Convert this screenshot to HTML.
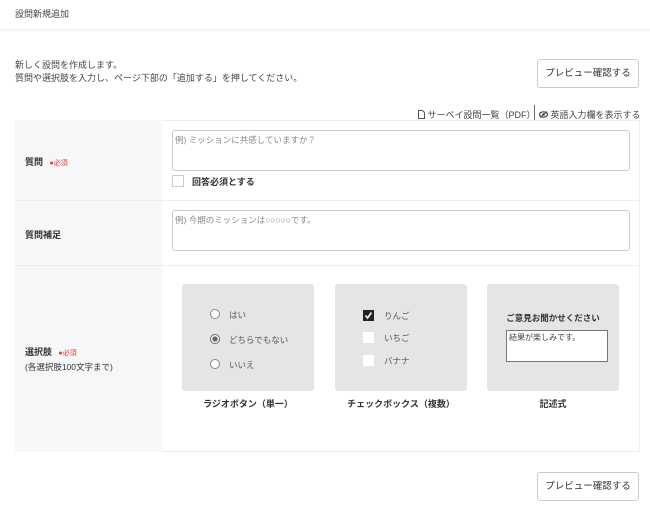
<!DOCTYPE html>
<html><head><meta charset="utf-8"><style>
*{box-sizing:border-box;margin:0;padding:0}
body{width:650px;height:512px;background:#fff;font-family:"Liberation Sans","Noto Sans CJK JP",sans-serif;color:#333;font-size:9px;position:relative;overflow:hidden}
.a{position:absolute}
.btn{position:absolute;left:537px;width:102px;height:29px;border:1px solid #ccc;border-radius:3px;background:#fff;font-size:9.5px;text-align:center;line-height:27px;color:#333}
.ta{position:absolute;left:172px;width:458px;height:41px;border:1px solid #ccc;border-radius:3px;padding:3px 2px;color:#888;font-size:8.5px}
.card{position:absolute;top:284px;width:132px;height:107px;background:#e5e5e5;border-radius:3px}
.cap{position:absolute;top:397px;width:132px;text-align:center;font-weight:bold;font-size:9px}
.rad{position:absolute;width:10px;height:10px;border:1px solid #888;border-radius:50%;background:#fff}
.cb{position:absolute;width:11px;height:11px;background:#fff}
.lab{position:absolute;font-size:8.5px;color:#555}
</style></head><body>
<div class="a" style="left:15px;top:7px;font-size:9px;color:#444">設問新規追加</div>
<div class="a" style="left:0;top:29px;width:650px;height:2px;background:#f4f5f7"></div>
<div class="a" style="left:15px;top:59px;line-height:13px;color:#444">新しく設問を作成します。<br>質問や選択肢を入力し、ページ下部の「追加する」を押してください。</div>
<div class="btn" style="top:59px">プレビュー確認する</div>
<div class="a" style="left:418px;top:108px;color:#444;font-size:9px">
<svg width="7" height="9" style="vertical-align:-1px"><path d="M.5.5h4l2 2v6h-6z" fill="none" stroke="#555"/></svg> サーベイ設問一覧（PDF）</div>
<div class="a" style="left:534px;top:105px;width:1px;height:16px;background:#666"></div>
<div class="a" style="left:539px;top:108px;color:#444;font-size:9px">
<svg width="9" height="7" style="vertical-align:0"><ellipse cx="4.5" cy="3.5" rx="4" ry="2.7" fill="none" stroke="#444" stroke-width="1.2"/><circle cx="4.5" cy="3.5" r="1.3" fill="#444"/><path d="M1 6.5L8 .5" stroke="#444"/></svg> 英語入力欄を表示する</div>
<div class="a" style="left:15px;top:120px;width:625px;height:332px;border:1px solid #eee"></div>
<div class="a" style="left:15px;top:120px;width:147px;height:332px;background:#f6f7f9"></div>
<div class="a" style="left:15px;top:200px;width:625px;height:1px;background:#eee"></div>
<div class="a" style="left:15px;top:265px;width:625px;height:1px;background:#eee"></div>
<div class="a" style="left:25px;top:155px;font-weight:bold;font-size:9px">質問 <span style="color:#e33;font-weight:normal;font-size:7px;margin-left:4px">●必須</span></div>
<div class="ta" style="top:130px">例) ミッションに共感していますか？</div>
<div class="a" style="left:172px;top:175px;width:12px;height:12px;border:1px solid #ccc"></div>
<div class="a" style="left:192px;top:175px;font-weight:bold;font-size:9px">回答必須とする</div>
<div class="a" style="left:25px;top:228px;font-weight:bold;font-size:9px">質問補足</div>
<div class="ta" style="top:210px">例) 今期のミッションは○○○○○です。</div>
<div class="a" style="left:25px;top:345px;font-weight:bold;font-size:9px">選択肢 <span style="color:#e33;font-weight:normal;font-size:7px;margin-left:4px">●必須</span></div>
<div class="a" style="left:25px;top:361px;font-size:8.5px">(各選択肢100文字まで)</div>
<div class="card" style="left:182px"></div>
<div class="rad" style="left:210px;top:309px"></div><div class="lab" style="left:229px;top:309px">はい</div>
<div class="rad" style="left:210px;top:334px;border-color:#666;background:radial-gradient(#666 45%,#fff 50%)"></div><div class="lab" style="left:229px;top:334px">どちらでもない</div>
<div class="rad" style="left:210px;top:359px"></div><div class="lab" style="left:229px;top:359px">いいえ</div>
<div class="cap" style="left:182px">ラジオボタン（単一）</div>
<div class="card" style="left:335px"></div>
<div class="cb" style="left:363px;top:310px;background:#222"><svg width="11" height="11"><path d="M2.5 5.5l2 2.5 4-5.5" fill="none" stroke="#fff" stroke-width="1.6"/></svg></div><div class="lab" style="left:384px;top:310px">りんご</div>
<div class="cb" style="left:363px;top:332px"></div><div class="lab" style="left:384px;top:332px">いちご</div>
<div class="cb" style="left:363px;top:355px"></div><div class="lab" style="left:384px;top:355px">バナナ</div>
<div class="cap" style="left:335px">チェックボックス（複数）</div>
<div class="card" style="left:487px"></div>
<div class="a" style="left:487px;top:312px;width:132px;text-align:center;font-weight:bold;font-size:8.5px">ご意見お聞かせください</div>
<div class="a" style="left:506px;top:330px;width:102px;height:32px;background:#fff;border:1px solid #777;font-size:8px;padding:1px 2px;color:#444">結果が楽しみです。</div>
<div class="cap" style="left:487px">記述式</div>
<div class="btn" style="top:472px">プレビュー確認する</div>
</body></html>
